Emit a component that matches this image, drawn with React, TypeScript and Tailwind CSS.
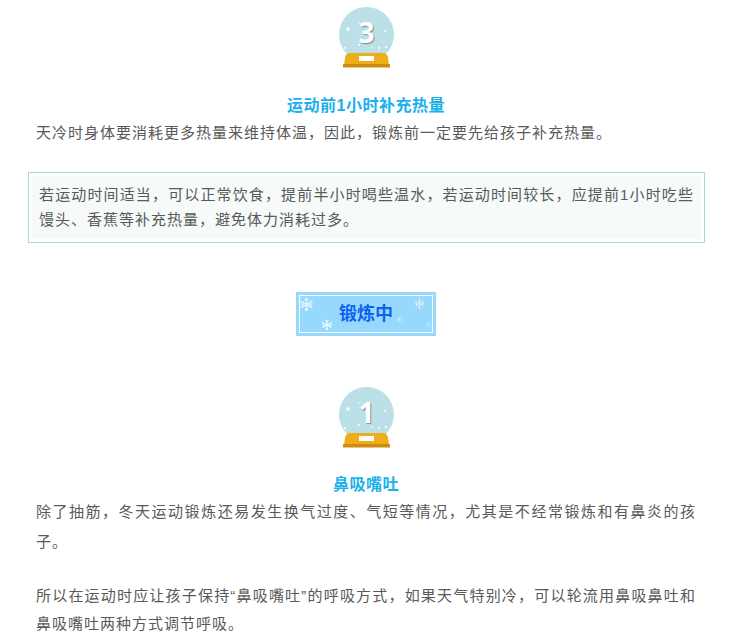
import React from 'react';

const Globe = ({ n }: { n: string }) => (
  <div className="relative h-[62px] w-[60px]">
    <svg width="60" height="62" viewBox="0 0 60 62">
      <circle cx="29.5" cy="28.5" r="27.5" fill="#bce0e8" />
      <circle cx="11" cy="23" r="1.8" fill="#fff" />
      <circle cx="22" cy="17" r="0.7" fill="#fff" />
      <circle cx="48" cy="25" r="1" fill="#fff" />
      <circle cx="8" cy="42" r="1" fill="#fff" />
      <circle cx="22" cy="39" r="1" fill="#fff" />
      <circle cx="35" cy="41" r="0.8" fill="#fff" />
      <circle cx="42" cy="42" r="1.1" fill="#fff" />
      <circle cx="49" cy="41" r="1.1" fill="#fff" />
      <path d="M8 52 a5 5 0 0 1 5-5 h33 a5 5 0 0 1 5 5 l1 7 h-45 z" fill="#eeae1c" />
      <rect x="6" y="58" width="47" height="3.5" rx="0.5" fill="#cf8c12" />
      <rect x="22" y="50" width="15" height="5" fill="#fff" />
    </svg>
    <div className="absolute inset-x-0 top-[7px] text-center text-[28px] font-bold leading-[38px] tracking-normal text-white [font-family:'Open_Sans',sans-serif] [text-shadow:1px_1px_1px_#7d8a94]">
      {n}
    </div>
  </div>
);

const Flake = ({ className, size }: { className: string; size: number }) => (
  <svg width={size} height={size} viewBox="0 0 20 20" className={className} stroke="#fff" strokeWidth="1.6" fill="none">
    <path d="M10 1v18M2.2 5.5l15.6 9M17.8 5.5l-15.6 9" />
    <path d="M7.5 2.5L10 5l2.5-2.5M7.5 17.5L10 15l2.5 2.5M2 9l3.3 1L4.2 13.3M18 9l-3.3 1 1.1 3.3" />
  </svg>
);

export default function App() {
  return (
    <div className="h-[635px] w-[733px] overflow-hidden bg-white text-[15px] tracking-[1px] text-[#595959] [font-family:'Liberation_Sans','Noto_Sans_CJK_SC',sans-serif]">
      <div className="flex justify-center pt-[6px]">
        <Globe n="3" />
      </div>
      <h2 className="mt-[25px] pr-[1px] text-center text-[16px] font-bold leading-[26px] tracking-[0.5px] text-[#19b0ec]">运动前1小时补充热量</h2>
      <p className="ml-[36px] w-[660px] text-justify leading-[28px]">天冷时身体要消耗更多热量来维持体温，因此，锻炼前一定要先给孩子补充热量。</p>

      <div className="ml-[28px] mt-[25px] w-[677px] border border-[#a9dccb] p-[3px]">
        <div className="bg-[#f6faf9] px-[7px] pb-[7px] pt-[6px] text-justify leading-[25px]">
          若运动时间适当，可以正常饮食，提前半小时喝些温水，若运动时间较长，应提前1小时吃些馒头、香蕉等补充热量，避免体力消耗过多。
        </div>
      </div>

      <div className="mt-[49px] flex justify-center">
        <div className="relative mr-[1px] h-[44px] w-[140px] border-[3px] border-[#97d9fd] bg-[#97d9fd]">
          <div className="flex h-full w-full items-center justify-center border border-white pt-[1px]">
            <span className="text-[18px] font-bold tracking-normal text-[#0b63f0]">锻炼中</span>
          </div>
          <Flake size={15} className="absolute left-[0px] top-[2px] opacity-80" />
          <Flake size={12} className="absolute left-[22px] top-[24px]" />
          <Flake size={11} className="absolute right-[8px] top-[3px] opacity-70" />
          <Flake size={7} className="absolute right-[30px] top-[21px] opacity-50" />
          <Flake size={7} className="absolute right-[1px] top-[26px] opacity-40" />
        </div>
      </div>

      <div className="mt-[50px] flex justify-center">
        <Globe n="1" />
      </div>
      <h2 className="mt-[25px] pr-[1px] text-center text-[16px] font-bold leading-[24px] tracking-[0.5px] text-[#19b0ec]">鼻吸嘴吐</h2>
      <p className="ml-[36px] w-[660px] text-justify leading-[30px]">除了抽筋，冬天运动锻炼还易发生换气过度、气短等情况，尤其是不经常锻炼和有鼻炎的孩子。</p>
      <p className="ml-[36px] mt-[25px] w-[660px] text-justify leading-[28px]">所以在运动时应让孩子保持“鼻吸嘴吐”的呼吸方式，如果天气特别冷，可以轮流用鼻吸鼻吐和鼻吸嘴吐两种方式调节呼吸。</p>
    </div>
  );
}
